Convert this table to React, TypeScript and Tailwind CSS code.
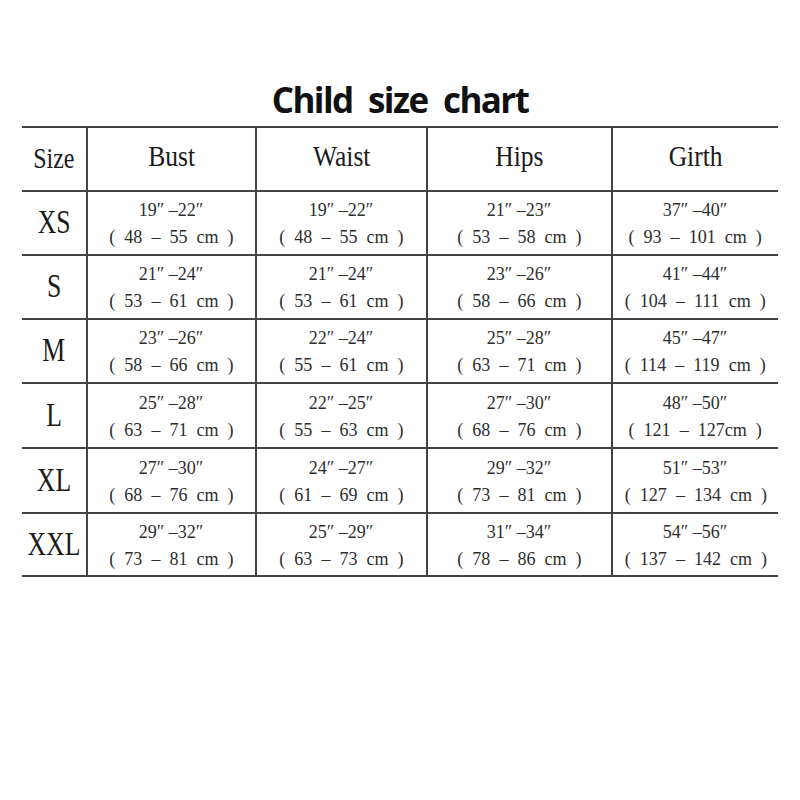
const columns = ["Bust", "Waist", "Hips", "Girth"];

const rows = [
  { size: "XS", h: "h-[64px]", cells: [["19″ –22″", "(  48  –  55  cm  )"], ["19″ –22″", "(  48  –  55  cm  )"], ["21″ –23″", "(  53  –  58  cm  )"], ["37″ –40″", "(  93  –  101  cm  )"]] },
  { size: "S", h: "h-[64px]", cells: [["21″ –24″", "(  53  –  61  cm  )"], ["21″ –24″", "(  53  –  61  cm  )"], ["23″ –26″", "(  58  –  66  cm  )"], ["41″ –44″", "(  104  –  111  cm  )"]] },
  { size: "M", h: "h-[64px]", cells: [["23″ –26″", "(  58  –  66  cm  )"], ["22″ –24″", "(  55  –  61  cm  )"], ["25″ –28″", "(  63  –  71  cm  )"], ["45″ –47″", "(  114  –  119  cm  )"]] },
  { size: "L", h: "h-[65px]", cells: [["25″ –28″", "(  63  –  71  cm  )"], ["22″ –25″", "(  55  –  63  cm  )"], ["27″ –30″", "(  68  –  76  cm  )"], ["48″ –50″", "(  121  –  127cm  )"]] },
  { size: "XL", h: "h-[65px]", cells: [["27″ –30″", "(  68  –  76  cm  )"], ["24″ –27″", "(  61  –  69  cm  )"], ["29″ –32″", "(  73  –  81  cm  )"], ["51″ –53″", "(  127  –  134  cm  )"]] },
  { size: "XXL", h: "h-[65px]", cells: [["29″ –32″", "(  73  –  81  cm  )"], ["25″ –29″", "(  63  –  73  cm  )"], ["31″ –34″", "(  78  –  86  cm  )"], ["54″ –56″", "(  137  –  142  cm  )"]] },
];

const grid = "grid grid-cols-[64px_169px_171px_185px_167px]";
const serif = "font-['Liberation_Serif',serif]";

export default function App() {
  return (
    <div className={`w-[800px] h-[800px] bg-white text-[#1a1a1a] ${serif}`}>
      <div className="h-[126px] flex items-end justify-center pb-[9px]">
        <h1 className="font-['Open_Sans',sans-serif] font-bold text-[35px] tracking-[-1.6px] [word-spacing:8px] leading-none text-[#111]">
          Child size chart
        </h1>
      </div>

      <div className="mx-[22px] w-[756px]">
        <div className={`${grid} h-[64px] border-t-2 border-[#444]`}>
          <div className="flex items-center justify-center">
            <span className="inline-block text-[30px] scale-x-[0.8] -translate-y-[2px]">Size</span>
          </div>
          {columns.map((c) => (
            <div key={c} className="flex items-center justify-center border-l-2 border-[#444]">
              <span className="inline-block text-[29px] scale-x-[0.88] -translate-y-[2px]">{c}</span>
            </div>
          ))}
        </div>

        {rows.map((r, i) => (
          <div
            key={r.size}
            className={`${grid} ${r.h} border-t-2 border-[#444] ${i === rows.length - 1 ? "border-b-2" : ""}`}
          >
            <div className="flex items-center justify-center">
              <span className="inline-block text-[33px] scale-x-[0.78]">{r.size}</span>
            </div>
            {r.cells.map((cell, j) => (
              <div
                key={j}
                className="flex flex-col items-center justify-center border-l-2 border-[#444] text-[19px] text-[#2e2e2e] leading-[27px] whitespace-pre"
              >
                <span className="inline-block scale-x-[0.95]">{cell[0]}</span>
                <span className="inline-block scale-x-[0.95]">{cell[1]}</span>
              </div>
            ))}
          </div>
        ))}
      </div>
    </div>
  );
}
